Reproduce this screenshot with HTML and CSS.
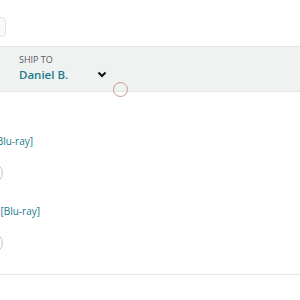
FILE: index.html
```html
<!DOCTYPE html>
<html lang="en">
<head>
    <meta charset="UTF-8">
    <meta name="viewport" content="width=device-width, initial-scale=1.0">
    <title>Checkout</title>
    <link rel="stylesheet" href="styles.css">
</head>
<body>
    <div class="top">
        <div class="search-box"></div>
    </div>

    <div class="ship-bar">
        <div class="ship-to">
            <div class="ship-label">SHIP TO</div>
            <div class="ship-name">
                <span>Daniel B.</span>
                <span class="chevron">
                    <svg width="10" height="7" viewBox="0 0 10 7"><path d="M1.5 1.5 L5 5 L8.5 1.5" fill="none" stroke="#111" stroke-width="2"/></svg>
                </span>
            </div>
        </div>
        <span class="cursor-ring"></span>
    </div>

    <ul class="items">
        <li class="item">
            <div class="item-title"><a href="#">Movie Collection [Blu-ray]</a></div>
            <span class="radio"></span>
        </li>
        <li class="item second">
            <div class="item-title"><a href="#">Movie Collection [Blu-ray]</a></div>
            <span class="radio"></span>
        </li>
    </ul>
</body>
</html>
```

FILE: styles.css
```css
body {
    margin: 0;
    font-family: 'Open Sans', 'Liberation Sans', sans-serif;
    color: #0f1111;
    background: #fff;
    overflow: hidden;
}
.top {
    height: 46px;
    padding-top: 17px;
    box-sizing: border-box;
}
.search-box {
    margin-left: -20px;
    width: 26px;
    height: 20px;
    box-sizing: border-box;
    border: 1px solid #e3e6e6;
    border-radius: 4px;
    background: #fafafa;
}
.ship-bar {
    position: relative;
    height: 44px;
    background: #f0f2f2;
    border-top: 1px solid #e3e6e6;
    border-bottom: 1px solid #e3e6e6;
}
.ship-to {
    padding: 7px 0 0 19px;
}
.ship-label {
    font-size: 9px;
    line-height: 12px;
    color: #565959;
}
.ship-name {
    display: flex;
    align-items: center;
    font-size: 11.5px;
    line-height: 17px;
    font-weight: 600;
    color: #1b7a8a;
}
.chevron {
    margin-left: 29px;
    display: flex;
}
.cursor-ring {
    position: absolute;
    left: 113px;
    top: 35px;
    width: 13px;
    height: 13px;
    border: 1px solid #c99a9a;
    border-radius: 50%;
}
.items {
    list-style: none;
    margin: 0;
    padding: 0;
    border-bottom: 1px solid #e7e7e7;
}
.item {
    padding-top: 42px;
    height: 70px;
}
.item.second {
    padding-top: 0;
    height: 70px;
}
.item-title {
    display: flex;
    justify-content: flex-end;
    width: 33px;
    font-size: 10px;
    line-height: 14px;
}
.item.second .item-title {
    width: 40px;
}
.item-title a {
    white-space: nowrap;
    flex-shrink: 0;
    color: #1b7a8a;
    text-decoration: none;
}
.radio {
    display: block;
    margin-top: 15px;
    margin-left: -17px;
    width: 18px;
    height: 18px;
    border: 1px solid #c7c7c7;
    border-radius: 50%;
}
```
